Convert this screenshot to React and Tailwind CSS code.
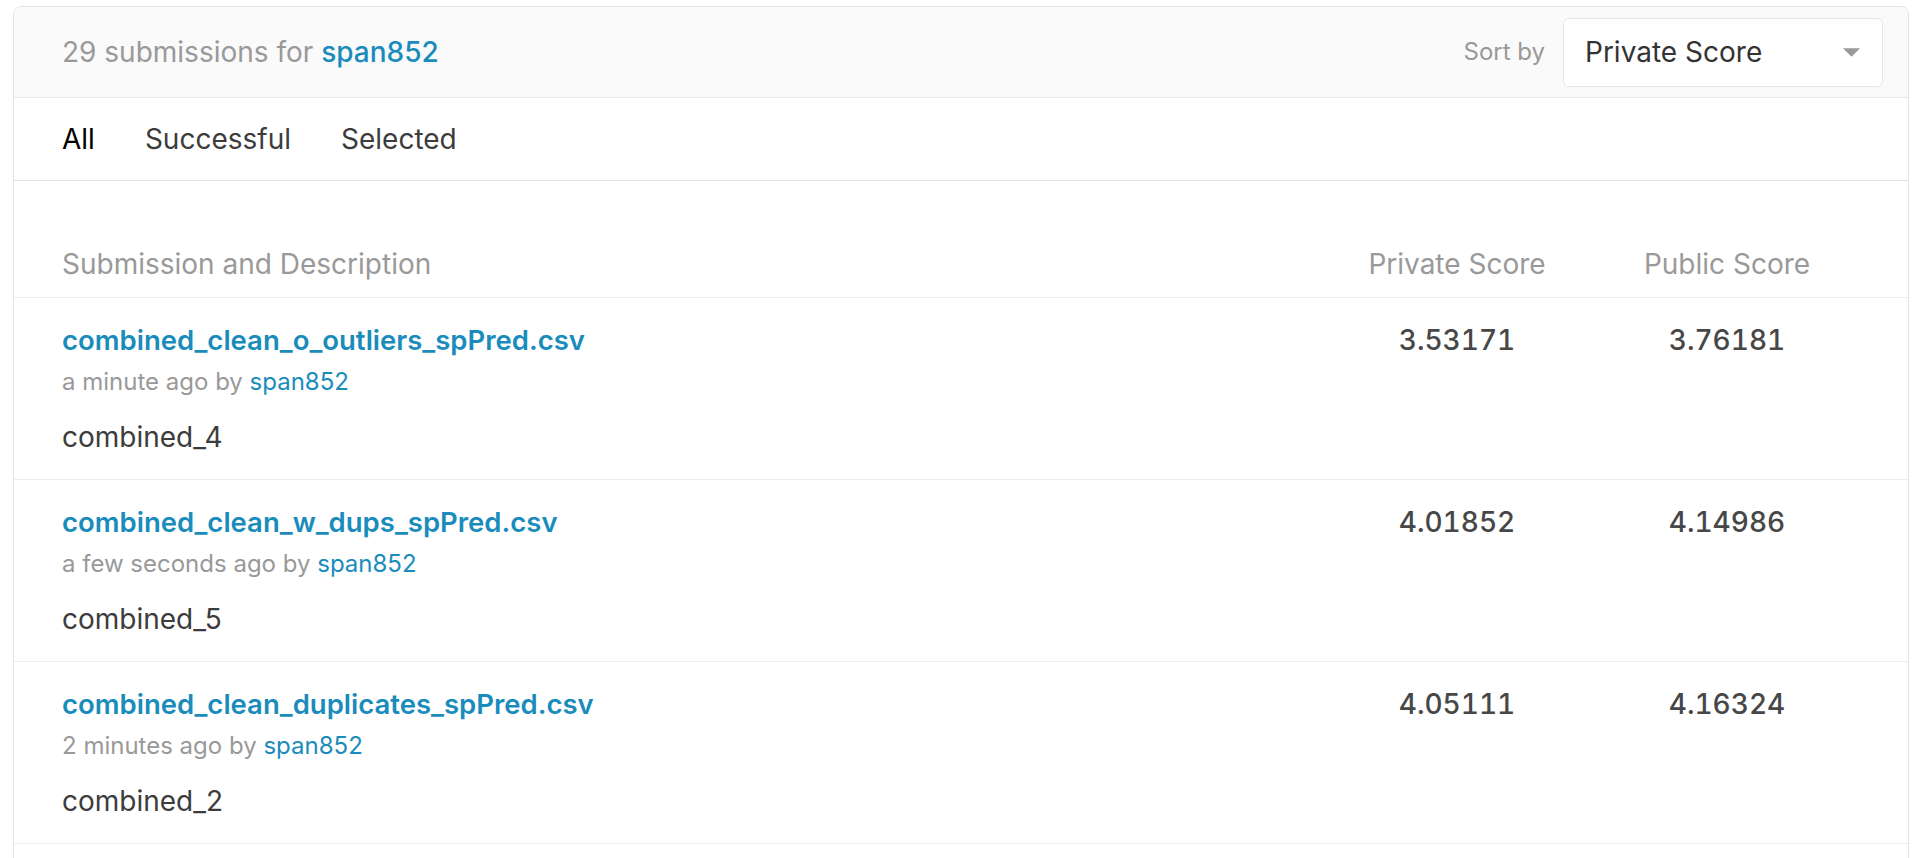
const submissions = [
  {
    file: "combined_clean_o_outliers_spPred.csv",
    when: "a minute ago",
    user: "span852",
    description: "combined_4",
    privateScore: "3.53171",
    publicScore: "3.76181",
  },
  {
    file: "combined_clean_w_dups_spPred.csv",
    when: "a few seconds ago",
    user: "span852",
    description: "combined_5",
    privateScore: "4.01852",
    publicScore: "4.14986",
  },
  {
    file: "combined_clean_duplicates_spPred.csv",
    when: "2 minutes ago",
    user: "span852",
    description: "combined_2",
    privateScore: "4.05111",
    publicScore: "4.16324",
  },
];

const tabs = ["All", "Successful", "Selected"];

export default function App() {
  return (
    <div className="h-screen overflow-hidden bg-white pl-[13px] pt-[6px] font-['Inter','Liberation_Sans',sans-serif]">
      <div className="w-[1896px] overflow-hidden rounded-t-lg border border-[#e3e3e3]">
        {/* header */}
        <div className="flex h-[91px] items-center justify-between border-b border-[#e8e8e8] bg-[#fafafa] pl-[48px] pr-[25px]">
          <p className="text-[28px] leading-10 text-[#999]">
            29 submissions for{" "}
            <a href="#" className="font-medium text-[#1a8cbc]">
              span852
            </a>
          </p>
          <div className="flex items-center gap-[18px]">
            <span className="text-[24px] text-[#999]">Sort by</span>
            <button
              type="button"
              className="flex h-[69px] w-[320px] items-center justify-between rounded-md border border-[#e6e6e6] bg-white pl-[21px] pr-[22px] text-left"
            >
              <span className="text-[28px] text-[#333]">Private Score</span>
              <svg viewBox="0 0 10 5" className="h-[9px] w-[17px] fill-[#999]" aria-hidden>
                <path d="M0 0h10L5 5z" />
              </svg>
            </button>
          </div>
        </div>

        {/* tabs */}
        <div className="flex h-[83px] items-center gap-[50px] border-b border-[#e3e3e3] px-[48px] text-[28px]">
          {tabs.map((tab, i) => (
            <a key={tab} href="#" className={i === 0 ? "text-black" : "text-[#3c3c3c]"}>
              {tab}
            </a>
          ))}
        </div>

        {/* column headers */}
        <div className="flex items-center border-b border-[#ededed] pb-[15px] pl-[48px] pr-[46px] pt-[65px] text-[28px] leading-9 text-[#999]">
          <div className="flex-1">Submission and Description</div>
          <div className="w-[270px] text-center">Private Score</div>
          <div className="w-[270px] text-center">Public Score</div>
        </div>

        {submissions.map((s) => (
          <div
            key={s.file}
            className="flex h-[182px] border-b border-[#ededed] pl-[48px] pr-[46px] pt-[24px]"
          >
            <div className="flex-1">
              <a href="#" className="block text-[27.5px] font-semibold leading-9 text-[#1a8cbc]">
                {s.file}
              </a>
              <p className="mt-2 text-[24px] leading-8 text-[#999]">
                {s.when} by{" "}
                <a href="#" className="text-[#1a8cbc]">
                  {s.user}
                </a>
              </p>
              <p className="mt-[21px] text-[28px] leading-9 text-[#3c3c3c]">{s.description}</p>
            </div>
            <div className="w-[270px] text-center text-[28px] font-medium leading-9 tabular-nums text-[#474747]">
              {s.privateScore}
            </div>
            <div className="w-[270px] text-center text-[28px] font-medium leading-9 tabular-nums text-[#474747]">
              {s.publicScore}
            </div>
          </div>
        ))}
        <div className="h-[60px]" />
      </div>
    </div>
  );
}
